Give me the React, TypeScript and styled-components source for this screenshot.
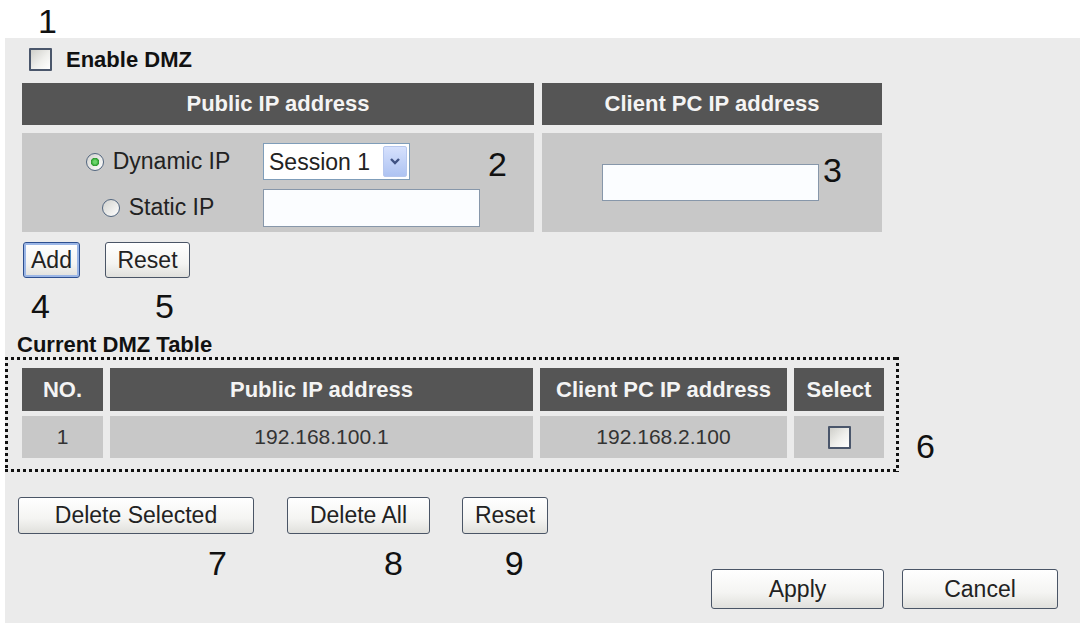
import styled, { createGlobalStyle } from "styled-components";

const GlobalStyle = createGlobalStyle`
  html, body {
    margin: 0;
    padding: 0;
    background: #fff;
  }
  body {
    font-family: "Liberation Sans", Arial, sans-serif;
    color: #111;
  }
  * {
    box-sizing: border-box;
  }
`;

const Screen = styled.div`
  width: 1087px;
  height: 623px;
  overflow: hidden;
  background: #fff;
  display: flex;
  flex-direction: column;
`;

const TopBand = styled.div`
  height: 38px;
  padding: 4px 0 0 38px;
`;

// callout numbers drawn over the screenshot
const Num = styled.span<{ $ml?: number; $mt?: number; $mb?: number }>`
  display: inline-block;
  font-size: 34px;
  line-height: 34px;
  color: #111;
  margin-left: ${(p) => p.$ml ?? 0}px;
  margin-top: ${(p) => p.$mt ?? 0}px;
  margin-bottom: ${(p) => p.$mb ?? 0}px;
`;

const Panel = styled.div`
  flex: 1;
  margin: 0 7px 0 5px;
  background: #ebebeb;
  padding-top: 10px;
`;

const EnableRow = styled.label`
  display: flex;
  align-items: center;
  gap: 14px;
  height: 23px;
  padding-left: 24px;
`;

const Check = styled.input.attrs({ type: "checkbox" })<{ $size: number }>`
  appearance: none;
  margin: 0;
  width: ${(p) => p.$size}px;
  height: ${(p) => p.$size}px;
  border: 2px solid #4a566b;
  border-radius: 1px;
  background: linear-gradient(135deg, #cfcfca 0%, #efefec 55%, #ffffff 100%);
`;

const BoldText = styled.span`
  font-weight: bold;
  font-size: 22px;
  line-height: 23px;
  color: #111;
`;

const EntryGrid = styled.div`
  display: grid;
  grid-template-columns: 512px 340px;
  grid-template-rows: 42px 99px;
  column-gap: 8px;
  row-gap: 8px;
  margin: 12px 0 0 17px;
`;

const HeadCell = styled.div`
  background: #555;
  color: #f4f4f4;
  font-weight: bold;
  font-size: 22px;
  display: flex;
  align-items: center;
  justify-content: center;
`;

const BodyCell = styled.div<{ $padLeft?: number }>`
  background: #c8c8c8;
  color: #333;
  font-size: 21px;
  display: flex;
  align-items: center;
  justify-content: center;
  padding-left: ${(p) => p.$padLeft ?? 0}px;
`;

const IpChoice = styled.div`
  align-self: stretch;
  width: 100%;
  padding: 4px 0 0 36px;
  display: grid;
  grid-template-columns: 200px 217px 30px;
  grid-auto-rows: 38px;
  column-gap: 5px;
  row-gap: 8px;
  align-content: center;
  align-items: center;
`;

const RadioLabel = styled.label`
  justify-self: center;
  display: flex;
  align-items: center;
  gap: 9px;
  font-size: 23px;
  color: #222;
`;

const Radio = styled.input.attrs({ type: "radio" })`
  appearance: none;
  margin: 0;
  width: 18px;
  height: 18px;
  border-radius: 50%;
  border: 1.5px solid #52667f;
  background: linear-gradient(135deg, #d2d2ce, #ffffff);

  &:checked {
    background: radial-gradient(circle, #6ad66a 0 1.5px, #27952a 4px, transparent 4.5px),
      linear-gradient(135deg, #d2d2ce, #ffffff);
  }
`;

const SelectBox = styled.div`
  width: 147px;
  height: 37px;
  border: 1px solid #7f9db9;
  background: #fff;
  display: flex;
  align-items: stretch;
  padding: 2px;
`;

const Select = styled.select`
  appearance: none;
  flex: 1;
  min-width: 0;
  border: none;
  background: transparent;
  font-family: inherit;
  font-size: 23px;
  color: #222;
  padding-left: 3px;
  outline: none;
`;

const ArrowBox = styled.span`
  width: 24px;
  border: 1px solid #b6c7ee;
  border-radius: 2px;
  background: linear-gradient(#d6e1fd, #aec3f2);
  display: flex;
  align-items: center;
  justify-content: center;
`;

const TextInput = styled.input<{ $w: number; $h: number }>`
  width: ${(p) => p.$w}px;
  height: ${(p) => p.$h}px;
  border: 1px solid #8797aa;
  background: #fbfdff;
  margin: 0;
`;

const ButtonRow = styled.div<{ $mt: number; $pl: number }>`
  display: flex;
  align-items: center;
  margin-top: ${(p) => p.$mt}px;
  padding-left: ${(p) => p.$pl}px;
`;

const Button = styled.button<{ $w: number; $h: number; $ml?: number; $focus?: boolean }>`
  width: ${(p) => p.$w}px;
  height: ${(p) => p.$h}px;
  margin-left: ${(p) => p.$ml ?? 0}px;
  padding: 0;
  font-family: inherit;
  font-size: 23px;
  color: #222;
  border: 1px solid ${(p) => (p.$focus ? "#2d4f8f" : "#4a5566")};
  border-radius: 3px;
  background: linear-gradient(#ffffff, #f4f4f2 60%, #e0e0dc);
  box-shadow: ${(p) => (p.$focus ? "inset 0 0 0 2px #9bb6e6" : "none")};
`;

const NumRow = styled.div<{ $mt: number; $pl: number }>`
  display: flex;
  margin-top: ${(p) => p.$mt}px;
  padding-left: ${(p) => p.$pl}px;
`;

const SectionTitle = styled.div`
  margin-top: 11px;
  padding-left: 12px;
  font-weight: bold;
  font-size: 22px;
  line-height: 22px;
  color: #111;
`;

const TableRow = styled.div`
  display: flex;
  align-items: flex-end;
  margin-top: 1px;
`;

const DottedBox = styled.div`
  padding: 11px 15px 14px 17px;
  background:
    repeating-linear-gradient(to right, #111 0 3px, transparent 3px 6px) top / 100% 3px no-repeat,
    repeating-linear-gradient(to right, #111 0 3px, transparent 3px 6px) bottom / 100% 3px no-repeat,
    repeating-linear-gradient(to bottom, #111 0 3px, transparent 3px 6px) left / 3px 100% no-repeat,
    repeating-linear-gradient(to bottom, #111 0 3px, transparent 3px 6px) right / 3px 100% no-repeat;
`;

const DmzTable = styled.div`
  display: grid;
  grid-template-columns: 81px 423px 247px 90px;
  grid-template-rows: 43px 42px;
  column-gap: 7px;
  row-gap: 5px;
`;

const Footer = styled.div`
  display: flex;
  justify-content: space-between;
  align-items: flex-start;
  margin-top: 12px;
  padding: 0 22px 0 203px;
`;

const ActionGroup = styled.div`
  display: flex;
  gap: 18px;
  margin-top: 23px;
`;

const Chevron = () => (
  <svg width="12" height="9" viewBox="0 0 12 9">
    <path d="M2 2 L6 6 L10 2" fill="none" stroke="#3f5283" strokeWidth="2.4" />
  </svg>
);

const App = () => {
  return (
    <Screen>
      <GlobalStyle />
      <TopBand>
        <Num>1</Num>
      </TopBand>
      <Panel>
        <EnableRow>
          <Check $size={23} />
          <BoldText>Enable DMZ</BoldText>
        </EnableRow>

        <EntryGrid>
          <HeadCell>Public IP address</HeadCell>
          <HeadCell>Client PC IP address</HeadCell>
          <BodyCell>
            <IpChoice>
              <RadioLabel>
                <Radio name="iptype" defaultChecked />
                Dynamic IP
              </RadioLabel>
              <SelectBox>
                <Select defaultValue="1">
                  <option value="1">Session 1</option>
                </Select>
                <ArrowBox>
                  <Chevron />
                </ArrowBox>
              </SelectBox>
              <Num $ml={3} $mt={5}>2</Num>
              <RadioLabel>
                <Radio name="iptype" />
                Static IP
              </RadioLabel>
              <TextInput $w={217} $h={38} />
            </IpChoice>
          </BodyCell>
          <BodyCell $padLeft={20}>
            <TextInput $w={217} $h={37} />
            <Num $ml={4} $mt={-26}>3</Num>
          </BodyCell>
        </EntryGrid>

        <ButtonRow $mt={10} $pl={18}>
          <Button $w={57} $h={36} $focus>Add</Button>
          <Button $w={85} $h={36} $ml={25}>Reset</Button>
        </ButtonRow>
        <NumRow $mt={11} $pl={26}>
          <Num>4</Num>
          <Num $ml={105}>5</Num>
        </NumRow>

        <SectionTitle>Current DMZ Table</SectionTitle>
        <TableRow>
          <DottedBox>
            <DmzTable>
              <HeadCell>NO.</HeadCell>
              <HeadCell>Public IP address</HeadCell>
              <HeadCell>Client PC IP address</HeadCell>
              <HeadCell>Select</HeadCell>
              <BodyCell>1</BodyCell>
              <BodyCell>192.168.100.1</BodyCell>
              <BodyCell>192.168.2.100</BodyCell>
              <BodyCell>
                <Check $size={23} />
              </BodyCell>
            </DmzTable>
          </DottedBox>
          <Num $ml={17} $mb={9}>6</Num>
        </TableRow>

        <ButtonRow $mt={25} $pl={13}>
          <Button $w={236} $h={37}>Delete Selected</Button>
          <Button $w={143} $h={37} $ml={33}>Delete All</Button>
          <Button $w={86} $h={37} $ml={32}>Reset</Button>
        </ButtonRow>

        <Footer>
          <div>
            <Num>7</Num>
            <Num $ml={157}>8</Num>
            <Num $ml={102}>9</Num>
          </div>
          <ActionGroup>
            <Button $w={173} $h={40}>Apply</Button>
            <Button $w={156} $h={40}>Cancel</Button>
          </ActionGroup>
        </Footer>
      </Panel>
    </Screen>
  );
};

export default App;
